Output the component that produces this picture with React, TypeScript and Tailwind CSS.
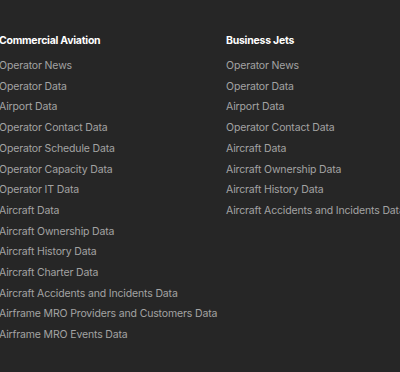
import React from "react";

const commercial = [
  "Operator News",
  "Operator Data",
  "Airport Data",
  "Operator Contact Data",
  "Operator Schedule Data",
  "Operator Capacity Data",
  "Operator IT Data",
  "Aircraft Data",
  "Aircraft Ownership Data",
  "Aircraft History Data",
  "Aircraft Charter Data",
  "Aircraft Accidents and Incidents Data",
  "Airframe MRO Providers and Customers Data",
  "Airframe MRO Events Data",
];

const jets = [
  "Operator News",
  "Operator Data",
  "Airport Data",
  "Operator Contact Data",
  "Aircraft Data",
  "Aircraft Ownership Data",
  "Aircraft History Data",
  "Aircraft Accidents and Incidents Data",
];

function Column({ title, items }: { title: string; items: string[] }) {
  return (
    <div className="flex flex-col shrink-0">
      <h3 className="text-[10.5px] font-bold tracking-[-0.25px] text-white leading-[14px] mb-[8px]">{title}</h3>
      <ul className="flex flex-col">
        {items.map((i) => (
          <li key={i} className="text-[10.5px] tracking-[-0.15px] leading-[20.7px] text-[#a3a3a3] whitespace-nowrap">
            {i}
          </li>
        ))}
      </ul>
    </div>
  );
}

export default function App() {
  return (
    <div className="w-[400px] h-[372px] overflow-hidden bg-[#262626]" style={{ fontFamily: "Inter, sans-serif" }}>
      <div className="flex pt-[34px] -ml-px">
        <div className="w-[227px] shrink-0">
          <Column title="Commercial Aviation" items={commercial} />
        </div>
        <Column title="Business Jets" items={jets} />
      </div>
    </div>
  );
}
